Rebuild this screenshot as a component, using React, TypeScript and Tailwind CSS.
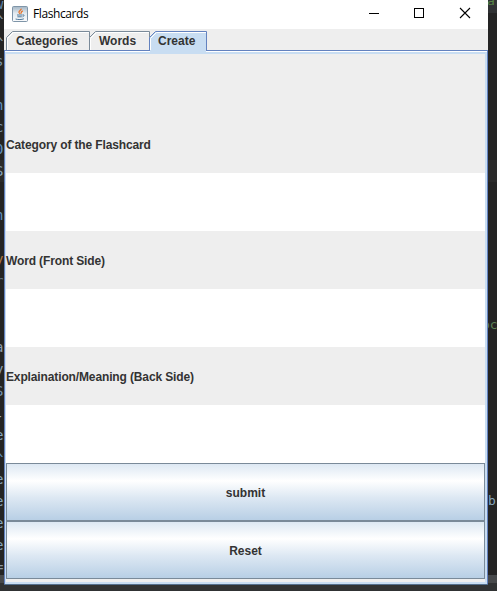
import React from "react";

type Fragment = { text: string; top: number; color: string };

const leftCode: Fragment[] = [
  { text: "w", top: -4, color: "#5f86ad" },
  { text: "^", top: 13, color: "#8a98a5" },
  { text: "^", top: 35, color: "#8a98a5" },
  { text: "s", top: 53, color: "#7896ad" },
  { text: "n", top: 97, color: "#5f90c0" },
  { text: "c", top: 119, color: "#7896ad" },
  { text: "0", top: 141, color: "#5f90c0" },
  { text: "S", top: 163, color: "#86a6be" },
  { text: "n", top: 207, color: "#5f90c0" },
  { text: "y", top: 251, color: "#b3793f" },
  { text: "r", top: 273, color: "#5d6f7d" },
  { text: "a", top: 339, color: "#8c9fb0" },
  { text: "y", top: 361, color: "#8c9fb0" },
  { text: "S", top: 383, color: "#7594b2" },
  { text: "-", top: 408, color: "#9aa8b5" },
  { text: "e", top: 427, color: "#86a6be" },
  { text: "^", top: 451, color: "#5f90c0" },
  { text: "e", top: 471, color: "#86a6be" },
  { text: "e", top: 493, color: "#86a6be" },
  { text: "e", top: 515, color: "#86a6be" },
  { text: "e", top: 537, color: "#86a6be" },
  { text: "=", top: 559, color: "#8a98a5" },
];

function CodeBackdrop() {
  return (
    <div className="absolute inset-0 overflow-hidden bg-[#242424] font-['DejaVu_Sans_Mono',monospace] text-[14px] font-normal leading-4">
      <div className="absolute right-0 top-0 h-[13px] w-[9px] bg-[#303234]" />
      <div className="absolute right-0 top-[160px] h-[22px] w-[9px] bg-[#2b2b2b]" />
      <div className="absolute left-0 top-[160px] h-[22px] w-1 bg-[#2b2b2b]" />
      {leftCode.map((f) => (
        <span key={f.top} className="absolute -left-[5px]" style={{ top: f.top, color: f.color }}>
          {f.text}
        </span>
      ))}
      <span className="absolute left-[487px] -top-[7px] text-[13px] text-[#568447]">ar</span>
      <span className="absolute left-[482px] top-[317px] text-[13px] text-[#5d8054]">oc</span>
      <span className="absolute left-[488px] top-[493px] text-[13px] text-[#86a6be]">b</span>
      <div className="absolute inset-x-0 top-[575px] h-2 bg-[#47494b]" />
      <div className="absolute inset-x-0 bottom-0 h-2 bg-[#303233]" />
    </div>
  );
}

function JavaIcon() {
  return (
    <svg width="16" height="16" viewBox="0 0 16 16" fill="none">
      <defs>
        <linearGradient id="iconFace" x1="0" y1="0" x2="0" y2="1">
          <stop stopColor="#a3b5c4" />
          <stop offset="0.45" stopColor="#e2eaf0" />
          <stop offset="1" stopColor="#fafbfc" />
        </linearGradient>
      </defs>
      <rect x="0.5" y="0.5" width="15" height="15" rx="1" fill="url(#iconFace)" stroke="#7f95a8" />
      <path d="M9.2 2.6C9.4 4.2 6.6 4.8 7 6.4c.2.7.9.9.9 1.5M10.8 4.8C9 5.6 8.9 6.4 9.3 7.6" stroke="#e8772e" strokeWidth="1.3" />
      <path d="M5 9h5.4M5.4 10.8h4.4M3.6 13c2.5.8 6.2.7 8.3-.2M10.6 9c1.9-.6 2 1.1-.1 1.9" stroke="#4f7899" />
    </svg>
  );
}

function TitleBar() {
  return (
    <header className="flex h-[29px] items-start bg-white">
      <div className="flex items-center gap-[5px] pl-2 pt-[5px]">
        <JavaIcon />
        <span className="whitespace-nowrap pt-px font-['Open_Sans',sans-serif] text-[12px] font-normal leading-4 tracking-[-0.4px] text-black">
          Flashcards
        </span>
      </div>
      <svg className="ml-auto" width="136" height="29" viewBox="0 0 136 29" fill="none" stroke="#000" shapeRendering="crispEdges">
        <path d="M17 13.5h10" />
        <rect x="62.5" y="8.5" width="9" height="9" />
        <path d="M108 8l10 10M118 8l-10 10" shapeRendering="auto" strokeWidth="1.1" />
      </svg>
    </header>
  );
}

function Tab({ label, width, active = false }: { label: string; width: number; active?: boolean }) {
  const line = active ? "#6382bf" : "#7a8a99";
  const h = active ? 20 : 19;
  return (
    <div className="relative h-[22px] shrink-0" style={{ width }}>
      <svg className="absolute inset-0" width={width} height="22">
        <path d={`M.5 ${h}V6.5L6.5 .5H${width - 0.5}V${h}`} fill={active ? "#c8ddf2" : "#eeeeee"} stroke={line} />
        <path d={`M1.5 ${h}V7.5L7.5 1.5H${width - 1}`} fill="none" stroke="#ffffff" />
        {active && <rect x="1" y="19" width={width - 2} height="3" fill="#c8ddf2" />}
      </svg>
      <span className={`relative block whitespace-nowrap pt-[2px] text-[12px] leading-4 ${active ? "pl-[9px]" : "pl-[10px]"}`}>{label}</span>
    </div>
  );
}

function Field({ label, first = false }: { label: string; first?: boolean }) {
  return (
    <>
      <label className={`flex h-[58px] shrink-0 items-center pt-[2px] text-[12px] tracking-[-0.13px] ${first ? "mt-[61px]" : ""}`}>
        <span className="leading-4">{label}</span>
      </label>
      <div className="h-[58px] shrink-0 bg-white" />
    </>
  );
}

function MetalButton({ label }: { label: string }) {
  return (
    <button className="flex h-[58px] shrink-0 items-center justify-center border border-[#7a8a99] bg-[linear-gradient(to_bottom,#dde8f3_0%,#ffffff_30%,#dde8f3_60%,#b8cfe5_100%)] pt-px text-[12px] font-bold leading-4">
      {label}
    </button>
  );
}

export default function App() {
  return (
    <div className="relative h-[591px] w-[497px] overflow-hidden font-['Liberation_Sans',Arial,sans-serif] font-bold text-[#333333]">
      <CodeBackdrop />
      <main className="relative ml-1 flex h-[585px] w-[484px] flex-col border-b border-[#536f8d] bg-[#eeeeee]">
        <TitleBar />
        <nav className="relative z-10 flex h-[21px] pl-[2px] pt-[2px]">
          <Tab label="Categories" width={84} />
          <div className="-ml-px"><Tab label="Words" width={61} /></div>
          <div className="-ml-px"><Tab label="Create" width={58} active /></div>
        </nav>
        <section className="flex min-h-0 grow flex-col border-l border-r border-t border-[#6382bf]">
          <div className="h-px shrink-0 bg-white" />
          <div className="flex min-h-0 grow flex-col border-y-2 border-l border-r-2 border-[#c8ddf2]">
            <Field label="Category of the Flashcard" first />
            <Field label="Word (Front Side)" />
            <Field label="Explaination/Meaning (Back Side)" />
            <MetalButton label="submit" />
            <MetalButton label="Reset" />
          </div>
        </section>
      </main>
    </div>
  );
}
